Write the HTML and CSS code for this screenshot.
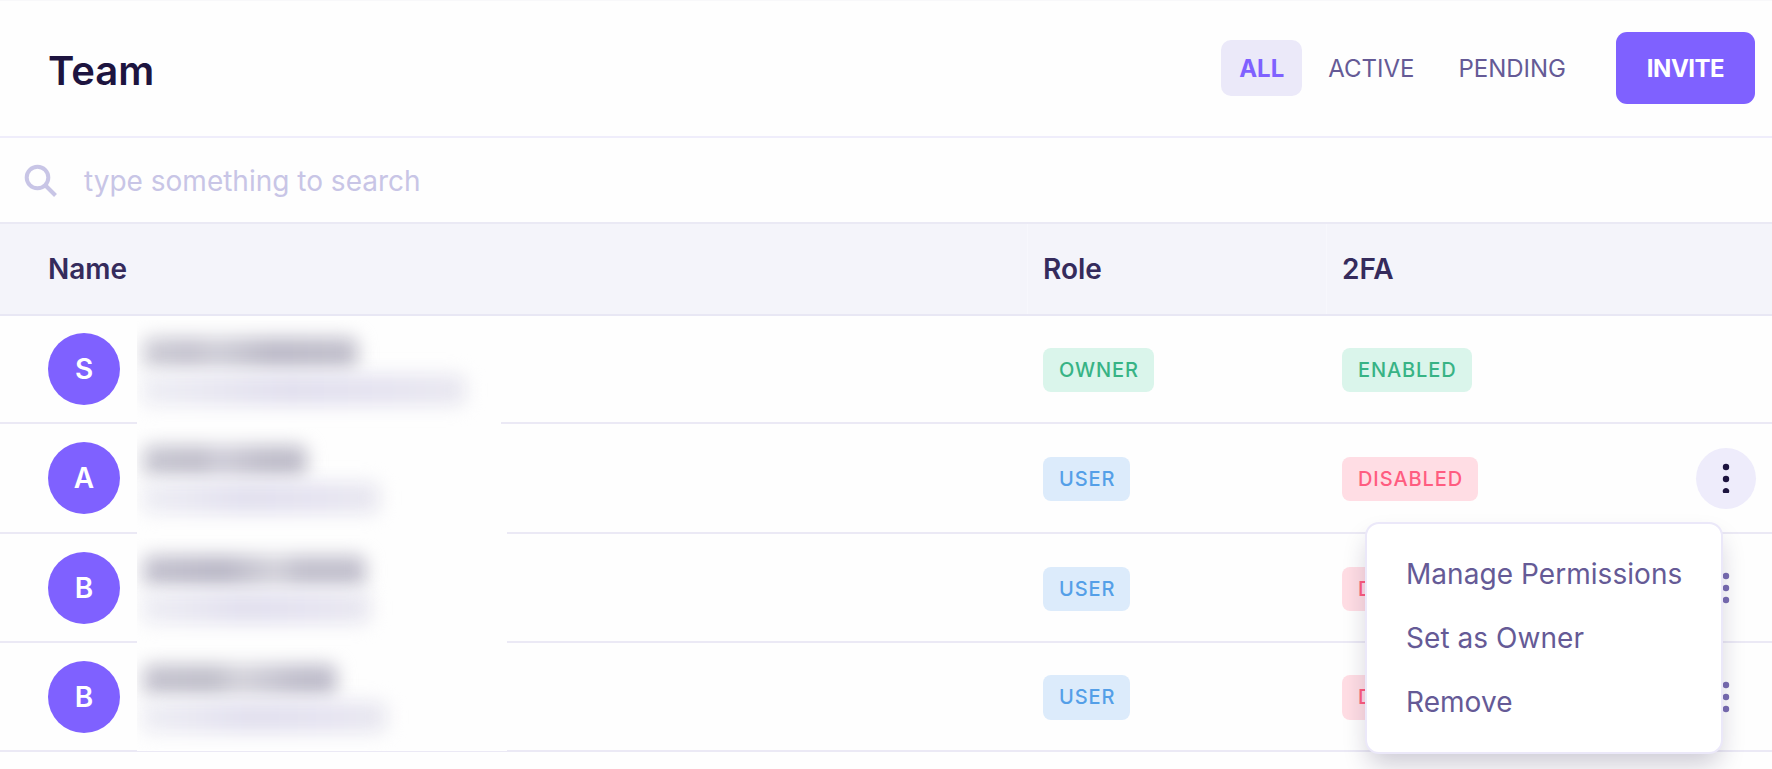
FILE: index.html
```
<!DOCTYPE html>
<html lang="en">
<head>
<meta charset="utf-8">
<title>Team</title>
<link rel="stylesheet" href="styles.css">
</head>
<body>
<header class="header">
  <h1 class="title">Team</h1>
  <nav class="tabs">
    <a class="tab active">ALL</a>
    <a class="tab">ACTIVE</a>
    <a class="tab">PENDING</a>
  </nav>
  <button class="invite">INVITE</button>
</header>
<div class="search">
  <svg class="search-icon" viewBox="0 0 34 34" width="34" height="34"><circle cx="13.5" cy="13.5" r="10.8"/><path d="M21 21 L31.5 31.5"/></svg>
  <span class="placeholder">type something to search</span>
</div>
<main class="table">
  <div class="row head"><div class="cell name">Name</div><div class="cell">Role</div><div class="cell">2FA</div></div>
  <div class="row">
    <div class="cell name"><span class="avatar">S</span><div class="redacted r1"><i class="bar dark"></i><i class="bar light"></i></div></div>
    <div class="cell"><span class="badge green">OWNER</span></div>
    <div class="cell"><span class="badge green">ENABLED</span></div>
  </div>
  <div class="row">
    <div class="cell name"><span class="avatar">A</span><div class="redacted r2"><i class="bar dark"></i><i class="bar light"></i></div></div>
    <div class="cell"><span class="badge blue">USER</span></div>
    <div class="cell"><span class="badge red">DISABLED</span>
      <span class="kebab open"><svg viewBox="0 0 60 60" width="60" height="61"><circle cx="30" cy="18.5" r="3.2"/><circle cx="30" cy="30.5" r="3.2"/><path d="M27.3 44.5 a3.2 3.2 0 1 1 5.4 0z"/></svg></span>
      <div class="menu"><a>Manage Permissions</a><a>Set as Owner</a><a>Remove</a></div>
    </div>
  </div>
  <div class="row">
    <div class="cell name"><span class="avatar">B</span><div class="redacted r3"><i class="bar dark"></i><i class="bar light"></i></div></div>
    <div class="cell"><span class="badge blue">USER</span></div>
    <div class="cell"><span class="badge red">DISABLED</span>
      <span class="kebab"><svg viewBox="0 0 60 60" width="60" height="60"><circle cx="30" cy="18" r="3.2"/><circle cx="30" cy="30" r="3.2"/><circle cx="30" cy="42" r="3.2"/></svg></span>
    </div>
  </div>
  <div class="row">
    <div class="cell name"><span class="avatar">B</span><div class="redacted r4"><i class="bar dark"></i><i class="bar light"></i></div></div>
    <div class="cell"><span class="badge blue tall">USER</span></div>
    <div class="cell"><span class="badge red tall">DISABLED</span>
      <span class="kebab"><svg viewBox="0 0 60 60" width="60" height="60"><circle cx="30" cy="18" r="3.2"/><circle cx="30" cy="30" r="3.2"/><circle cx="30" cy="42" r="3.2"/></svg></span>
    </div>
  </div>
</main>
</body>
</html>
```
FILE: styles.css
```
* { box-sizing: border-box; }
body { margin: 0; height: 769px; overflow: hidden; background: #fefefe; font-family: Inter, "Liberation Sans", sans-serif; color: #655a96; }
.header { height: 138px; display: flex; align-items: center; padding: 0 17px 1px 48px; border-top: 1px solid #f8f8fa; border-bottom: 2px solid #efedfb; }
.title { margin: 6px auto 0 0; font-size: 40px; font-weight: 600; line-height: 48px; color: #1d143f; }
.tabs { display: flex; gap: 8px; margin-right: 32px; }
.tab { height: 56px; line-height: 57px; padding: 0 18px; border-radius: 10px; font-size: 24px; }
.tab.active { background: #ebe9f9; color: #7f61ff; font-weight: 700; }
.invite { width: 139px; height: 72px; padding: 1px 0 0; border: 0; border-radius: 11px; background: #7f61ff; color: #fff; font: 700 24px Inter, sans-serif; letter-spacing: -0.5px; }
.search { height: 84px; display: flex; align-items: center; padding: 2px 0 0 24px; }
.search-icon { fill: none; stroke: #c8c5e6; stroke-width: 4; }
.placeholder { margin-left: 26px; font-size: 28px; color: #c8c5e6; }
.row { display: grid; grid-template-columns: 1027px 299px 446px; height: 109px; border-bottom: 2px solid #ebe9f5; }
.row:nth-child(2) { height: 108px; }
.row:nth-child(3) { height: 110px; }
.head { height: 94px; background: #f4f4fa; border-top: 2px solid #eae9f4; border-bottom-color: #e8e7f4; font-size: 28px; font-weight: 600; color: #352b5c; }
.head .cell + .cell { padding-left: 15px; border-left: 1px solid #f7f7fc; }
.cell { position: relative; display: flex; align-items: center; padding-left: 16px; }
.cell.name { padding-left: 48px; }
.avatar { width: 72px; height: 72px; border-radius: 50%; background: #7f61ff; color: #fff; font-size: 28px; font-weight: 600; line-height: 72px; text-align: center; }
.badge { height: 44px; line-height: 44px; margin-top: 2px; padding: 0 15px 0 16px; border-radius: 8px; font-size: 20px; font-weight: 500; letter-spacing: 0.9px; }
.badge.tall { height: 45px; }
.green { background: #daf5eb; color: #37b385; }
.blue { background: #dcebfb; color: #549fe8; }
.red { background: #ffdde4; color: #ff5c80; }
.kebab { position: absolute; right: 16px; width: 60px; height: 60px; fill: #7a6db3; }
.kebab.open { height: 61px; border-radius: 50%; background: #eeecfb; fill: #1d143f; }
.kebab svg { display: block; }
.menu { position: absolute; z-index: 5; left: 39px; top: 98px; width: 358px; height: 232px; padding: 18px 39px; display: flex; flex-direction: column; border: 2px solid #ebe8f9; border-radius: 14px; background: #fff; box-shadow: 0 14px 26px -4px rgba(29, 20, 63, .22); font-size: 28px; line-height: 64px; letter-spacing: 0.05px; white-space: nowrap; }
/* Hidden member details */
.redacted { position: absolute; z-index: 2; left: 137px; top: 4px; width: 370px; height: 108px; background: #fefefe; overflow: hidden; }
.bar { position: absolute; left: 6px; filter: blur(9px); border-radius: 8px; }
.dark { top: 17px; height: 32px; }
.light { top: 54px; left: 4px; height: 32px; background: linear-gradient(90deg, #eeeef4, #e1dfee 45%, #e5e3f0 75%, #e9e8f0); }
.r1 .dark { width: 215px; background: linear-gradient(90deg, #cfced7, #c5c3cf 22%, #d0cfd8 34%, #bcbac8 60%, #c2c0cc); }
.r1 .light { width: 325px; }
.r2 .dark { width: 164px; background: linear-gradient(90deg, #c8c7d2, #c1bfcb 35%, #d0ced9 46%, #bfbdca 75%); }
.r2 .light { width: 239px; }
.r3 .dark { width: 223px; background: linear-gradient(90deg, #c4c2cf, #b9b7c6 36%, #d4d3db 60%, #c2c0cd 70%); }
.r3 .light { width: 230px; }
.r4 .dark { width: 194px; background: linear-gradient(90deg, #c5c3cf, #c0bfca 36%, #d4d3db 50%, #bfbdcb 80%); }
.r4 .light { width: 246px; }
.r1.redacted { width: 364px; }
.r4.redacted { height: 104px; }
```
